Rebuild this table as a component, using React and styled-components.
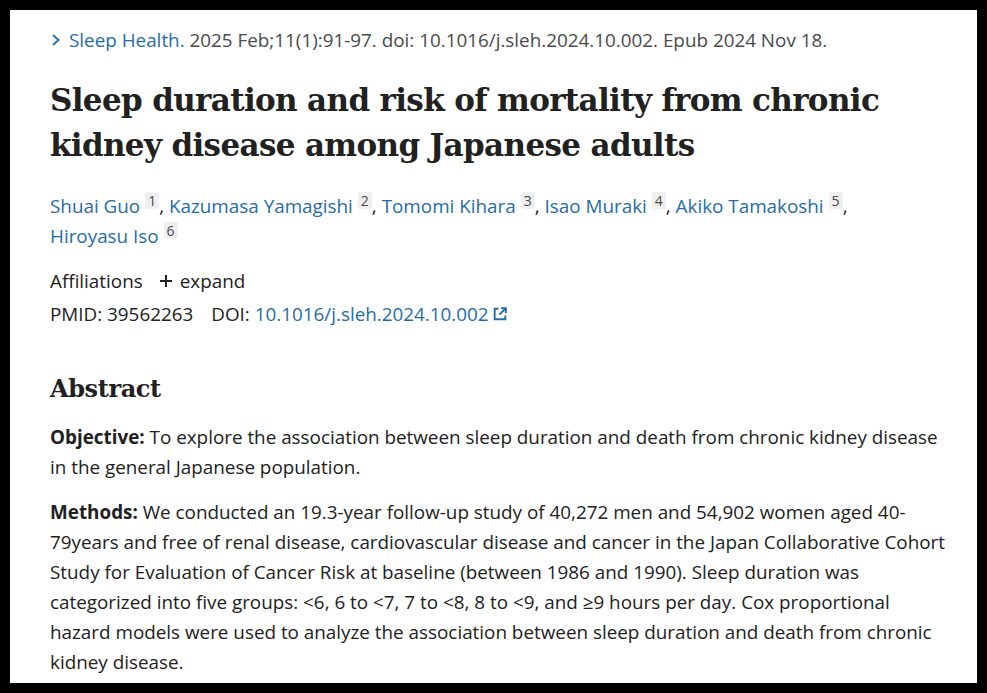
import React from 'react';
import styled, { createGlobalStyle } from 'styled-components';

const GlobalStyle = createGlobalStyle`
  html, body {
    margin: 0;
    padding: 0;
    background: #000;
  }
`;

const colors = {
  text: '#212121',
  link: '#1f6da6',
  muted: '#4a4a4a',
  chip: '#efefef',
};

const Frame = styled.div`
  width: 987px;
  height: 693px;
  box-sizing: border-box;
  padding: 10px;
  background: #000;
`;

const Page = styled.main`
  height: 100%;
  overflow: hidden;
  background: #fff;
  padding: 18px 8px 0 40px;
  box-sizing: border-box;
  color: ${colors.text};
  font-family: "Open Sans", "Noto Sans", sans-serif;
  font-size: 18.85px;
  white-space: nowrap;
`;

const Citation = styled.div`
  display: flex;
  align-items: center;
  gap: 7px;
  font-size: 18.85px;
  line-height: 24px;
  color: ${colors.muted};
`;

const Link = styled.a`
  color: ${colors.link};
  text-decoration: none;
`;

const Title = styled.h1`
  margin: 26px 0 0;
  font-family: "DejaVu Serif", "Liberation Serif", serif;
  font-weight: bold;
  font-size: 31px;
  line-height: 45px;
  letter-spacing: -0.65px;
  color: ${colors.text};
`;

const Authors = styled.div`
  margin-top: 23px;
  line-height: 30px;
`;

const Sup = styled.sup`
  display: inline-block;
  margin-left: 5px;
  padding: 0 3px;
  font-size: 14px;
  line-height: 17px;
  vertical-align: 7px;
  color: ${colors.muted};
  background: ${colors.chip};
  border-radius: 2px;
`;

const MetaRow = styled.div`
  display: flex;
  align-items: center;
  gap: ${(p) => p.$gap || 8}px;
  margin-top: ${(p) => p.$top || 0}px;
  line-height: 30px;
`;

const ExpandButton = styled.span`
  display: inline-flex;
  align-items: center;
  gap: 7px;
  margin-left: 8px;
`;

const DoiLink = styled(Link)`
  display: inline-flex;
  align-items: center;
  gap: 3px;
`;

const Heading = styled.h2`
  margin: 42px 0 0;
  font-family: "DejaVu Serif", "Liberation Serif", serif;
  font-weight: bold;
  font-size: 24px;
  line-height: 36px;
  letter-spacing: -0.4px;
`;

const Paragraph = styled.p`
  margin: ${(p) => p.$top || 0}px 0 0;
  line-height: 30px;
`;

const Label = styled.strong`
  font-weight: 700;
`;

const Chevron = () => (
  <svg width="12" height="14" viewBox="0 0 12 14" fill="none">
    <path d="M3 2 L8.5 7 L3 12" stroke={colors.link} strokeWidth="1.8" />
  </svg>
);

const Plus = () => (
  <svg width="14" height="14" viewBox="0 0 14 14">
    <path d="M7 1 V13 M1 7 H13" stroke={colors.text} strokeWidth="2" />
  </svg>
);

const ExternalIcon = () => (
  <svg width="16" height="16" viewBox="0 0 15 15" fill="none">
    <path d="M6 2.5 H2.5 V12.5 H12.5 V9" stroke={colors.link} strokeWidth="1.8" />
    <path d="M8.5 2 H13 V6.5 M13 2 L7 8" stroke={colors.link} strokeWidth="1.8" />
  </svg>
);

const authors = [
  ['Shuai Guo', 1],
  ['Kazumasa Yamagishi', 2],
  ['Tomomi Kihara', 3],
  ['Isao Muraki', 4],
  ['Akiko Tamakoshi', 5],
  ['Hiroyasu Iso', 6],
];

export default function App() {
  return (
    <Frame>
      <GlobalStyle />
      <Page>
        <Citation>
          <Chevron />
          <span>
            <Link href="#">Sleep Health.</Link> 2025 Feb;11(1):91-97. doi: 10.1016/j.sleh.2024.10.002. Epub 2024 Nov 18.
          </span>
        </Citation>

        <Title>
          Sleep duration and risk of mortality from chronic
          <br />
          kidney disease among Japanese adults
        </Title>

        <Authors>
          {authors.map(([name, n], i) => (
            <React.Fragment key={name}>
              <Link href="#">{name}</Link>
              <Sup>{n}</Sup>
              {i < authors.length - 1 && ', '}
              {i === 4 && <br />}
            </React.Fragment>
          ))}
        </Authors>

        <MetaRow $top={15}>
          Affiliations
          <ExpandButton>
            <Plus />
            expand
          </ExpandButton>
        </MetaRow>
        <MetaRow $top={3} $gap={18}>
          <span>PMID: 39562263</span>
          <span>
            DOI:{' '}
            <DoiLink href="#">
              10.1016/j.sleh.2024.10.002
              <ExternalIcon />
            </DoiLink>
          </span>
        </MetaRow>

        <Heading>Abstract</Heading>

        <Paragraph $top={15}>
          <Label>Objective:</Label> To explore the association between sleep duration and death from chronic kidney disease
          <br />
          in the general Japanese population.
        </Paragraph>
        <Paragraph $top={15}>
          <Label>Methods:</Label> We conducted an 19.3-year follow-up study of 40,272 men and 54,902 women aged 40-
          <br />
          79years and free of renal disease, cardiovascular disease and cancer in the Japan Collaborative Cohort
          <br />
          Study for Evaluation of Cancer Risk at baseline (between 1986 and 1990). Sleep duration was
          <br />
          categorized into five groups: &lt;6, 6 to &lt;7, 7 to &lt;8, 8 to &lt;9, and ≥9 hours per day. Cox proportional
          <br />
          hazard models were used to analyze the association between sleep duration and death from chronic
          <br />
          kidney disease.
        </Paragraph>
      </Page>
    </Frame>
  );
}
